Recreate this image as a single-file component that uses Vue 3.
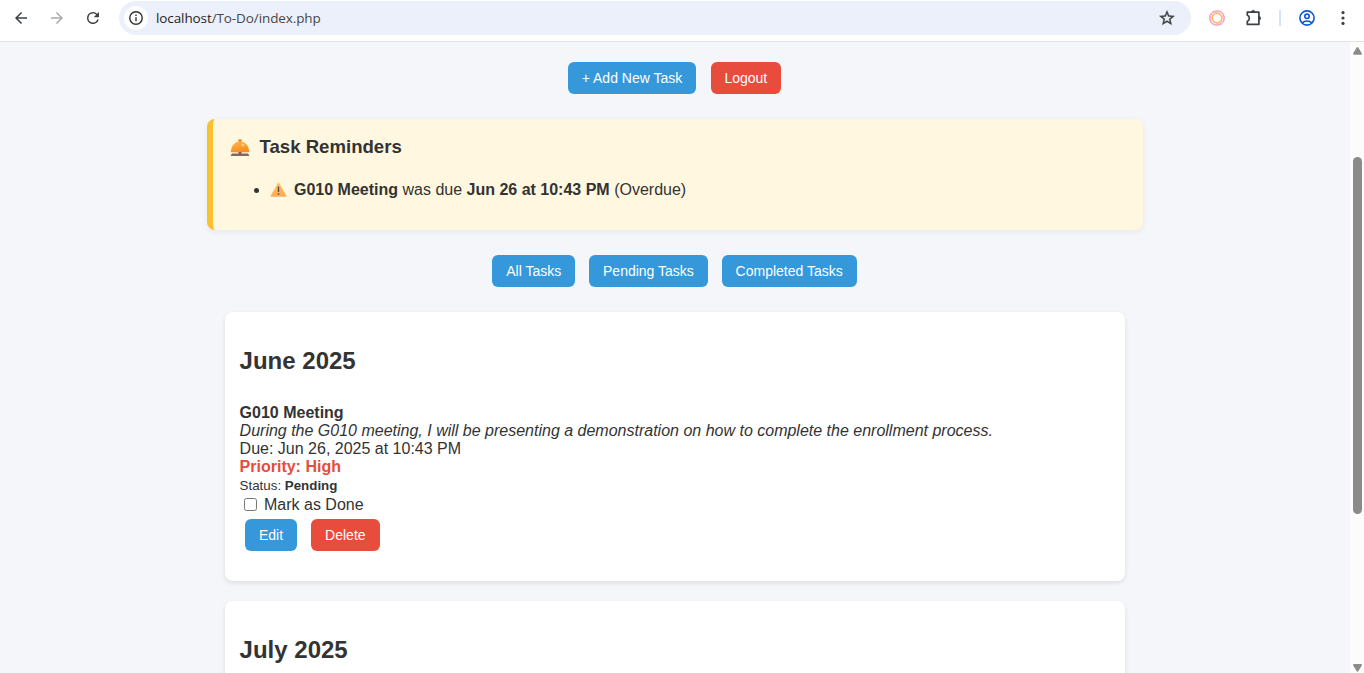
<script setup>
import { ref } from 'vue'

const filters = ['All Tasks', 'Pending Tasks', 'Completed Tasks']
const done = ref(false)
</script>

<template>
  <div class="window">
    <header class="toolbar">
      <svg class="nav back" viewBox="0 0 24 24"><path d="M20 11H7.83l5.59-5.59L12 4l-8 8 8 8 1.41-1.41L7.83 13H20v-2z" /></svg>
      <svg class="nav forward" viewBox="0 0 24 24"><path d="M12 4l-1.41 1.41L16.17 11H4v2h12.17l-5.58 5.59L12 20l8-8z" /></svg>
      <svg class="nav reload" viewBox="0 0 24 24"><path d="M17.65 6.35A7.96 7.96 0 0 0 12 4a8 8 0 1 0 7.73 10h-2.08A6 6 0 1 1 12 6c1.66 0 3.14.69 4.22 1.78L13 11h7V4l-2.35 2.35z" /></svg>
      <div class="address">
        <span class="site-info">
          <svg width="14" height="14" viewBox="0 0 14 14" fill="none" stroke="#303134" stroke-width="1.4"><circle cx="7" cy="7" r="6.2" /><path d="M7 6.3v4M7 3.5v1.6" /></svg>
        </span>
        <span class="url"><b>localhost</b>/To-Do/index.php</span>
        <svg class="star" viewBox="0 0 24 24"><path d="M22 9.24l-7.19-.62L12 2 9.19 8.63 2 9.24l5.46 4.73L5.82 21 12 17.27 18.18 21l-1.63-7.03L22 9.24zM12 15.4l-3.76 2.27 1-4.28-3.32-2.88 4.38-.38L12 6.1l1.71 4.04 4.38.38-3.32 2.88 1 4.28L12 15.4z" /></svg>
      </div>
      <svg class="swirl" viewBox="0 0 16 16" fill="none">
        <g stroke="#f799c4" stroke-width="0.9"><ellipse cx="8" cy="8" rx="7.6" ry="6.9" transform="rotate(35 8 8)" /><ellipse cx="8" cy="8" rx="7.6" ry="6.6" transform="rotate(-45 8 8)" /></g>
        <g stroke="#ffa63d" stroke-width="0.8"><ellipse cx="8" cy="8" rx="5.4" ry="4.5" transform="rotate(65 8 8)" /><ellipse cx="8" cy="8" rx="5.4" ry="4.5" transform="rotate(-25 8 8)" /></g>
      </svg>
      <svg class="puzzle" viewBox="0 0 18 18"><path d="M2.3 3.2H13.9V15.3H2.3V12.2C5 11.4 5 7.1 2.3 6.3Z" fill="none" stroke="#3c4043" stroke-width="1.7" stroke-linejoin="round" /><path d="M6.4 3a1.8 1.8 0 0 1 3.6 0zM14 7.4a1.8 1.8 0 0 1 0 3.6z" fill="#3c4043" stroke="#3c4043" stroke-width="0.5" /></svg>
      <span class="separator"></span>
      <svg class="profile" viewBox="0 0 16 16" fill="none" stroke="#0b57d0" stroke-width="1.6"><circle cx="8" cy="8" r="7.1" /><circle cx="8" cy="6.3" r="2.2" /><path d="M3.2 12.8c2.6-2.4 7-2.4 9.6 0" /></svg>
      <svg class="more" viewBox="0 0 4 16" fill="#3c4043"><circle cx="2" cy="2.6" r="1.6" /><circle cx="2" cy="8" r="1.6" /><circle cx="2" cy="13.4" r="1.6" /></svg>
    </header>

    <div class="viewport">
      <main class="page">
        <nav class="actions">
          <a class="btn">+ Add New Task</a>
          <a class="btn danger">Logout</a>
        </nav>

        <section class="reminders">
          <h3>
            <svg class="bell" viewBox="0 0 20 18">
              <defs><linearGradient id="bellFill" x1="0" y1="0" x2="0.4" y2="1"><stop offset="0" stop-color="#ffb84a" /><stop offset="1" stop-color="#f98c22" /></linearGradient></defs>
              <rect x="8.5" y="12.8" width="3" height="2.2" fill="#6f4a42" />
              <ellipse cx="10" cy="1.5" rx="2" ry="1.2" fill="#ef8a2c" />
              <rect x="9.2" y="2" width="1.6" height="1" fill="#d9782c" />
              <path d="M.8 13.2C1.2 6.2 5 2.5 10 2.5S18.8 6.2 19.2 13.2Z" fill="url(#bellFill)" />
              <circle cx="13" cy="6" r="1.6" fill="#ffdc85" opacity="0.7" />
              <path d="M2.2 14.4h15.6q1.4 1 1.6 2.6H.6q.2-1.6 1.6-2.6z" fill="#87645e" />
            </svg>
            Task Reminders
          </h3>
          <ul>
            <li>
              <svg class="warn" viewBox="0 0 17 15">
                <defs><linearGradient id="warnFill" x1="0" y1="0" x2="0.3" y2="1"><stop offset="0" stop-color="#ffc65c" /><stop offset="1" stop-color="#ffab50" /></linearGradient></defs>
                <path d="M8.5.7 16.2 14.3H.8Z" fill="url(#warnFill)" stroke="url(#warnFill)" stroke-width="0.8" stroke-linejoin="round" />
                <path d="M7.8 4.4h1.4v5.6H7.8zM7.8 11.2h1.4v1.6H7.8z" fill="#5d4a4c" />
              </svg>
              <strong>G010 Meeting</strong> was due <strong>Jun 26 at 10:43 PM</strong> (Overdue)
            </li>
          </ul>
        </section>

        <nav class="filters">
          <a v-for="f in filters" :key="f" class="btn">{{ f }}</a>
        </nav>

        <section class="card june">
          <h2>June 2025</h2>
          <div class="task">
            <strong>G010 Meeting</strong>
            <em>During the G010 meeting, I will be presenting a demonstration on how to complete the enrollment process.</em>
            <span>Due: Jun 26, 2025 at 10:43 PM</span>
            <strong class="priority">Priority: High</strong>
            <span class="status">Status: <b>Pending</b></span>
            <label class="mark"><input v-model="done" type="checkbox" />Mark as Done</label>
            <div class="task-actions">
              <a class="btn">Edit</a>
              <a class="btn danger">Delete</a>
            </div>
          </div>
        </section>

        <section class="card">
          <h2>July 2025</h2>
        </section>
      </main>

      <aside class="scrollbar">
        <svg width="9" height="8" viewBox="0 0 9 8"><path d="M4.5 1 8 6.8H1Z" fill="#8b8b8b" stroke="#8b8b8b" stroke-linejoin="round" stroke-width="1.8" /></svg>
        <span class="thumb"></span>
        <svg class="down" width="9" height="8" viewBox="0 0 9 8"><path d="M4.5 6.8 8 1H1Z" fill="#8b8b8b" stroke="#8b8b8b" stroke-linejoin="round" stroke-width="1.8" /></svg>
      </aside>
    </div>
  </div>
</template>

<style>
html, body { margin: 0; overflow: hidden; }
</style>

<style scoped>
* { box-sizing: border-box; }
.window {
  width: 1364px;
  height: 673px;
  display: flex;
  flex-direction: column;
  overflow: hidden;
  font-family: "Liberation Sans", Arial, sans-serif;
  font-size: 16px;
  line-height: 18px;
  color: #333;
}
.toolbar {
  flex: none;
  height: 42px;
  display: flex;
  align-items: center;
  padding: 0 0 6px 12px;
  background: #fff;
  border-bottom: 1px solid #dfe1e3;
}
.nav { width: 18px; height: 18px; flex: none; fill: #3c4043; margin-right: 18px; }
.forward { fill: #a9abae; }
.address {
  width: 1072px;
  height: 34px;
  flex: none;
  margin-left: -1px;
  display: flex;
  align-items: center;
  padding: 0 15px 0 5px;
  border-radius: 17px;
  background: #ebf0fa;
}
.site-info {
  width: 24px;
  height: 24px;
  border-radius: 50%;
  background: #fff;
  display: flex;
  align-items: center;
  justify-content: center;
}
.url {
  flex: 1;
  margin-left: 8px;
  font-family: "Open Sans", "Noto Sans", sans-serif;
  font-size: 13.5px;
  letter-spacing: -0.1px;
  color: #474747;
}
.url b { font-weight: 400; color: #1f1f1f; }
.star { width: 18px; height: 18px; fill: #3c4043; stroke: #3c4043; stroke-width: 0.5; }
.swirl { width: 16px; height: 16px; margin-left: 18px; flex: none; }
.puzzle { width: 18px; height: 18px; margin-left: 20px; flex: none; }
.separator { width: 2px; height: 16px; margin-left: 16px; background: #d3e3fd; flex: none; }
.profile { width: 16px; height: 16px; margin-left: 18px; flex: none; }
.more { width: 4px; height: 16px; margin-left: 26px; flex: none; }

.viewport { flex: 1; min-height: 0; display: flex; background: #f5f6fa; }
.page {
  width: 1350px;
  display: flex;
  flex-direction: column;
  align-items: center;
  padding-top: 20px;
  overflow: hidden;
}
.btn {
  display: block;
  height: 32px;
  padding: 8px 13.6px;
  border-radius: 6px;
  background: #3498db;
  color: #fff;
  font-size: 14px;
  line-height: 16px;
  white-space: nowrap;
}
.danger { background: #e74c3c; }
.actions, .filters { display: flex; flex: none; }
.actions { gap: 15px; margin-right: 1px; }
.filters { gap: 14px; margin-right: 1px; }
.filters .btn { padding: 8px 13.9px; }
.reminders {
  flex: none;
  width: 936px;
  height: 111px;
  margin: 25px 0;
  padding: 17px 15px 0 17px;
  border-left: 6px solid #fbc02d;
  border-radius: 8px;
  background: #fff7df;
  box-shadow: 0 2px 6px rgba(0, 0, 0, 0.06);
}
h3 { display: flex; align-items: center; margin: 0; font-size: 18.6px; line-height: 22px; }
.bell { width: 20px; height: 18px; margin: 1px 9.5px 0 0; }
ul { margin: 22px 0 0; padding: 0 0 0 40px; }
li { line-height: 20px; }
.warn { width: 17px; height: 15px; margin-right: 3.5px; vertical-align: -2px; }
.warn + strong { margin-left: 3.5px; }
.card {
  flex: none;
  width: 900px;
  height: 269px;
  margin-bottom: 20px;
  padding: 35px 15px 0 14.6px;
  border-radius: 8px;
  background: #fff;
  box-shadow: 0 2px 5px rgba(0, 0, 0, 0.1);
}
.june { margin-top: 25px; }
h2 { margin: 0 0 30px; font-size: 24px; line-height: 27px; }
.task { display: flex; flex-direction: column; }
.priority { color: #e74c3c; }
.status { font-size: 13.33px; line-height: 19px; }
.mark { display: flex; align-items: center; height: 20px; }
.mark input { width: 13px; height: 13px; margin: 0 7px 2px 4.4px; }
.task-actions { display: flex; gap: 14px; margin: 4px 0 0 5.4px; }
.task-actions .btn { padding: 8px 14px; }
.scrollbar {
  width: 14px;
  display: flex;
  flex-direction: column;
  align-items: center;
  padding: 5px 0 1px;
  background: #fcfcfc;
}
.scrollbar svg { flex: none; }
.thumb { width: 9px; height: 357px; margin-top: 102px; border-radius: 5px; background: #8b8b8b; }
.down { margin-top: auto; }
</style>
